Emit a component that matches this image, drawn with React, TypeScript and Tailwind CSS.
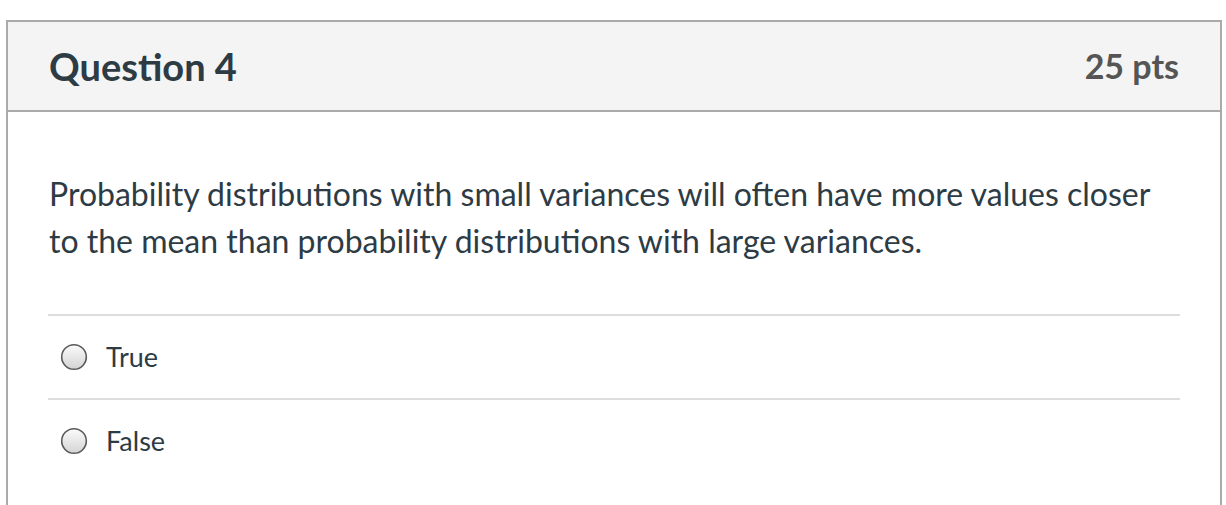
import React from "react";

function Radio() {
  return (
    <svg width="28" height="28" viewBox="0 0 28 28" className="shrink-0">
      <defs>
        <linearGradient id="rg" x1="0" y1="0" x2="0" y2="1">
          <stop offset="0" stopColor="#fbfbfb" />
          <stop offset="1" stopColor="#d4d4d4" />
        </linearGradient>
      </defs>
      <circle cx="14" cy="14" r="12.3" fill="url(#rg)" stroke="#5a5a5a" strokeWidth="1.6" />
    </svg>
  );
}

export default function App() {
  const answers = ["True", "False"];
  return (
    <div
      className="w-[1226px] h-[505px] overflow-hidden bg-white pt-[20px] pl-[6px] pr-[4px]"
      style={{ fontFamily: "Lato, 'Noto Sans', sans-serif" }}
    >
      <div className="border-2 border-b-0 border-[#aaaaaa] h-[600px]">
        <div className="h-[90px] bg-[#f4f4f4] border-b-2 border-[#aaaaaa] flex items-center justify-between px-[41px]">
          <div className="text-[38px] font-bold text-[#2d3b45] leading-[48px]">Question 4</div>
          <div className="text-[34px] font-bold text-[#555555] leading-[48px]">25 pts</div>
        </div>
        <div className="pt-[58px] px-[40px]">
          <div className="pl-[1px] text-[32px] leading-[47px] text-[#2d3b45]">
            Probability distributions with small variances will often have more values closer to the mean than probability distributions with large variances.
          </div>
          <div className="mt-[50px]">
            {answers.map((a) => (
              <div key={a} className="border-t-2 border-[#dddddd] h-[84px] flex items-center pl-[12px] gap-[18px]">
                <Radio />
                <span className="text-[27px] text-[#2d3b45]">{a}</span>
              </div>
            ))}
          </div>
        </div>
      </div>
    </div>
  );
}
